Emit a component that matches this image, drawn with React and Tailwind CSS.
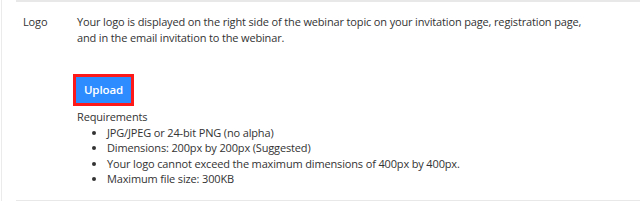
export default function App() {
  return (
    <div className="w-[640px] h-[201px] bg-white pl-[1px]" style={{ fontFamily: '"Open Sans", sans-serif' }}>
      <div className="h-[201px] border-l border-[#ebebeb] pl-[14px] text-[#333] text-[11px] leading-[15.5px] tracking-[-0.15px]">
        <div className="border-t-2 border-b border-[#e8e8e8] h-[201px] flex pt-[12px]">
          <div className="w-[61px] pl-[7px]">Logo</div>
          <div className="flex-1">
            <p className="pr-[50px]">Your logo is displayed on the right side of the webinar topic on your invitation page, registration page, and in the email invitation to the webinar.</p>
            <button className="block mt-[32px] -ml-[1px] bg-[#2d8cff] text-white font-semibold w-[55px] h-[26px] text-[11.5px] tracking-[-0.1px] outline-[3px] outline-solid outline-[#ff1a1a]">Upload</button>
            <div className="mt-[6px]">Requirements</div>
            <ul className="list-disc pl-[30px]">
              <li>JPG/JPEG or 24-bit PNG (no alpha)</li>
              <li>Dimensions: 200px by 200px (Suggested)</li>
              <li>Your logo cannot exceed the maximum dimensions of 400px by 400px.</li>
              <li>Maximum file size: 300KB</li>
            </ul>
          </div>
        </div>
      </div>
    </div>
  );
}
